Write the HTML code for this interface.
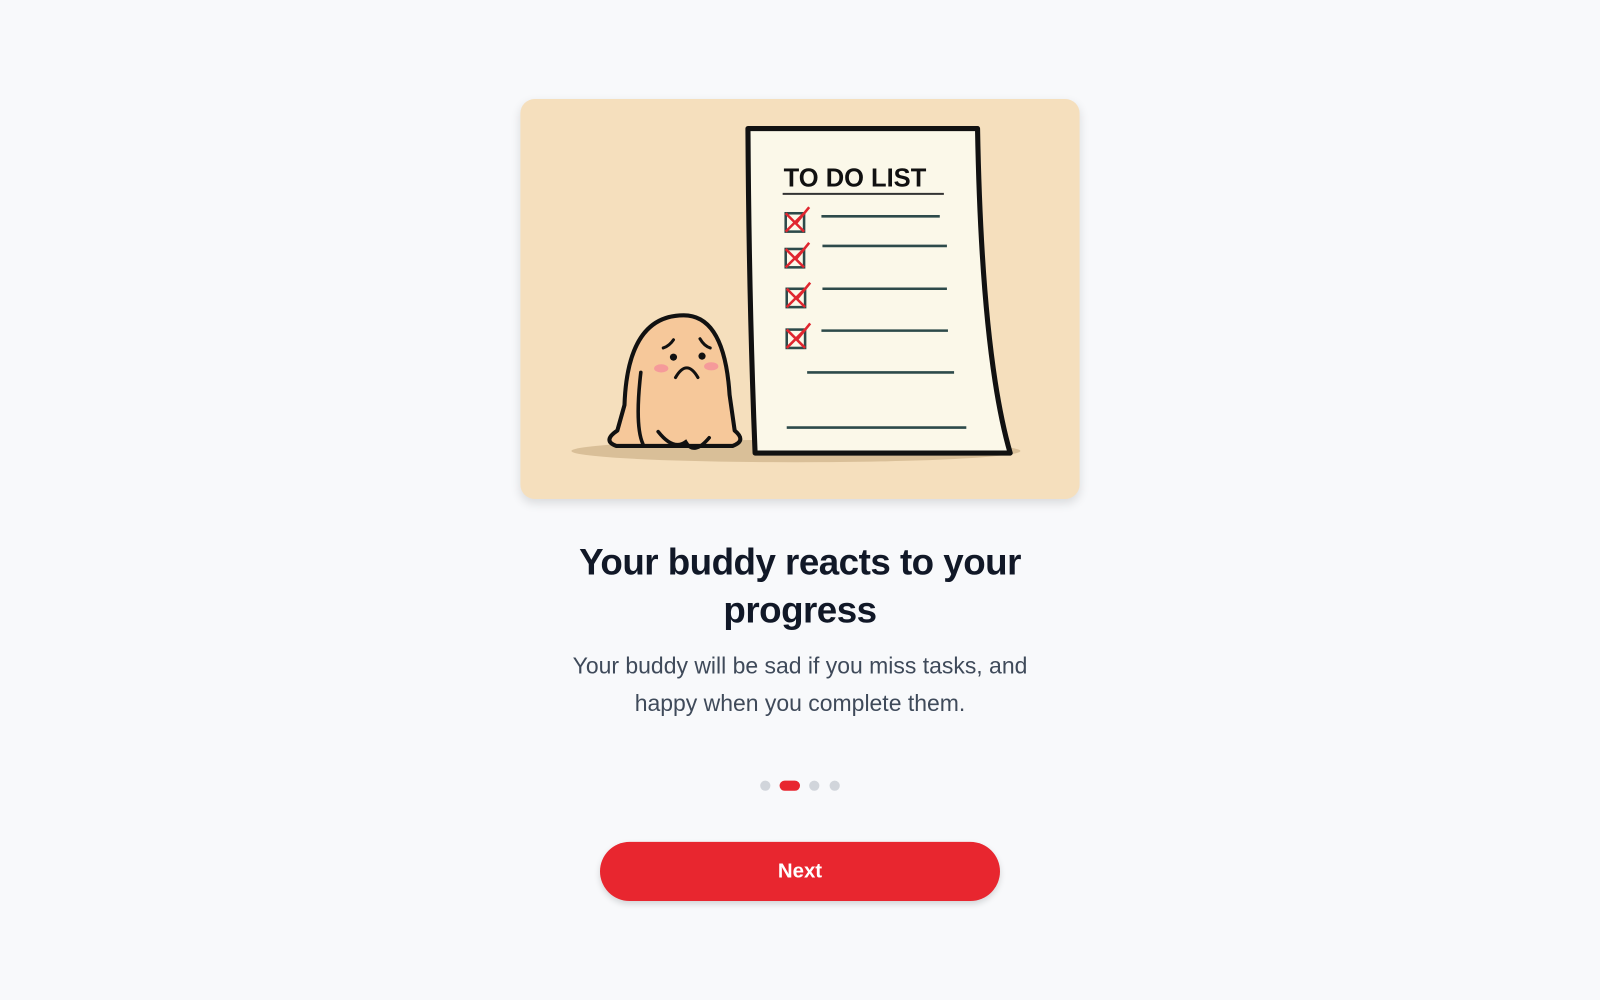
<!DOCTYPE html>
<html><head><style>
body{margin:0;width:1600px;height:1000px;background:#f8f9fb;font-family:"Liberation Sans",sans-serif;position:relative;overflow:hidden}
.wrap{position:absolute;left:0;top:0;width:1568px;height:980px;transform:scale(1.0204);transform-origin:0 0}
.card{position:absolute;left:510px;top:97px;width:548px;height:392px;border-radius:14px;background:#f5dfbd;box-shadow:0 4px 10px rgba(0,0,0,.12);overflow:hidden}
h1{position:absolute;left:484px;width:600px;top:527px;margin:0;text-align:center;font-size:36px;line-height:47px;color:#111827;letter-spacing:-0.5px}
p{position:absolute;left:484px;width:600px;top:634px;margin:0;text-align:center;font-size:22.5px;line-height:37px;color:#3f4a5a}
.dot{position:absolute;top:765px;width:10px;height:10px;border-radius:5px;background:#d1d5db}
.btn{position:absolute;left:588px;top:825px;width:392px;height:58px;border-radius:29px;background:#e8262f;color:#fff;font-weight:bold;font-size:20px;text-align:center;line-height:58px;box-shadow:0 3px 6px rgba(0,0,0,.15)}
</style></head><body>
<div class="wrap">
<div class="card">
<svg width="548" height="392" viewBox="0 0 548 392">
<ellipse cx="270" cy="345" rx="220" ry="11" fill="#d9bf98"/>
<path d="M223 29 L448 29 Q452 250 480 347 L230 347 Q224 200 223 29Z" fill="#fbf8e9" stroke="#111" stroke-width="5" stroke-linejoin="round"/>
<text x="258" y="86" font-family="Liberation Sans" font-size="25" font-weight="bold" fill="#111">TO DO LIST</text>
<line x1="257" y1="93" x2="415" y2="93" stroke="#333" stroke-width="2"/>
<g stroke="#2d4a4a" stroke-width="2.5">
<line x1="295" y1="115" x2="411" y2="115"/><line x1="296" y1="144" x2="418" y2="144"/>
<line x1="296" y1="186" x2="418" y2="186"/><line x1="295" y1="227" x2="419" y2="227"/>
<line x1="281" y1="268" x2="425" y2="268"/><line x1="261" y1="322" x2="437" y2="322"/></g>
<g fill="none" stroke-width="2.5">
<g transform="translate(260,112)"><rect width="18" height="18" stroke="#2d4a4a"/><path d="M0 0L18 18M18 0L0 18M10 10L23-6" stroke="#e0262f"/></g>
<g transform="translate(260,147)"><rect width="18" height="18" stroke="#2d4a4a"/><path d="M0 0L18 18M18 0L0 18M10 10L23-6" stroke="#e0262f"/></g>
<g transform="translate(261,186)"><rect width="18" height="18" stroke="#2d4a4a"/><path d="M0 0L18 18M18 0L0 18M10 10L23-6" stroke="#e0262f"/></g>
<g transform="translate(261,226)"><rect width="18" height="18" stroke="#2d4a4a"/><path d="M0 0L18 18M18 0L0 18M10 10L23-6" stroke="#e0262f"/></g>
</g>
<path d="M94 340 Q80 335 95 325 L102 300 Q105 212 160 212 Q200 212 205 290 L210 325 Q222 335 208 340 Z" fill="#f6c89a" stroke="#111" stroke-width="4" stroke-linejoin="round"/>
<path d="M118 268 Q112 320 120 338 M135 326 Q150 345 162 336 Q170 350 185 332" fill="none" stroke="#111" stroke-width="3.5" stroke-linecap="round"/>
<ellipse cx="138" cy="264" rx="7" ry="4" fill="#f59a9a"/><ellipse cx="187" cy="262" rx="7" ry="4" fill="#f59a9a"/>
<circle cx="150" cy="253" r="3.5" fill="#111"/><circle cx="178" cy="252" r="3.5" fill="#111"/>
<path d="M140 244 Q146 242 150 236 M176 235 Q180 242 186 244 M152 273 Q163 254 174 273" fill="none" stroke="#111" stroke-width="3" stroke-linecap="round"/>
</svg>
</div>
<h1>Your buddy reacts to your<br>progress</h1>
<p>Your buddy will be sad if you miss tasks, and<br>happy when you complete them.</p>
<div class="dot" style="left:745px"></div>
<div class="dot" style="left:764px;width:20px;background:#e8262f"></div>
<div class="dot" style="left:793px"></div>
<div class="dot" style="left:813px"></div>
<div class="btn">Next</div>
</div>
</body></html>
